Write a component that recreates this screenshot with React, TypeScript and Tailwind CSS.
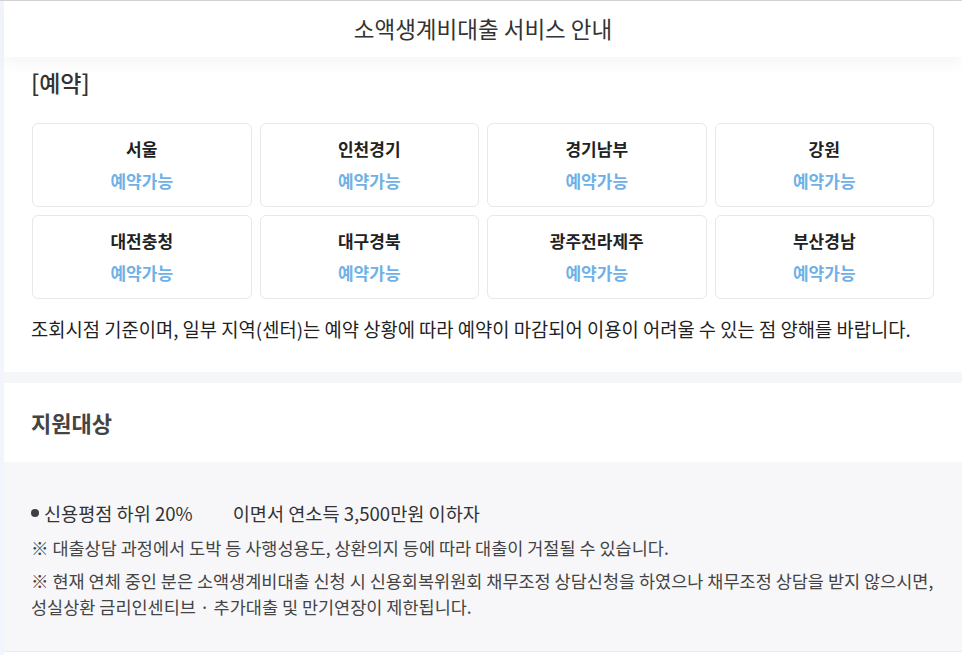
import React from "react";

const regions = [
  "서울",
  "인천경기",
  "경기남부",
  "강원",
  "대전충청",
  "대구경북",
  "광주전라제주",
  "부산경남",
];

const font = { fontFamily: '"Noto Sans CJK KR", "Noto Sans", sans-serif' };

export default function App() {
  return (
    <div style={font} className="flex min-h-screen border-t border-[#d2d2d2] bg-white text-[#333]">
      <div className="w-[4px] shrink-0 bg-[#f2f5fb]" />
      <div className="flex-1 flex flex-col">
        <header className="relative z-10 h-[56px] flex items-center justify-center bg-white text-[22.5px] text-[#333] shadow-[0_8px_14px_rgba(0,0,0,0.035)]">
          소액생계비대출 서비스 안내
        </header>

        {/* 예약 현황 */}
        <section className="px-[28px] pt-[10px] pb-[30px] bg-white">
          <h2 className="h-[30px] leading-[30px] text-[23px] font-medium text-[#333] -ml-[1px]">[예약]</h2>
          <div className="mt-[26px] grid grid-cols-4 gap-[8px]">
            {regions.map((name) => (
              <div
                key={name}
                className="h-[84px] rounded-[6px] border border-[#e8e8e8] flex flex-col items-center justify-center gap-[8px]"
              >
                <div className="leading-[24px] text-[17px] font-bold text-[#222]">{name}</div>
                <div className="leading-[24px] text-[17px] font-bold text-[#6fb1e7]">예약가능</div>
              </div>
            ))}
          </div>
          <p className="mt-[17px] -ml-[1px] leading-[26px] text-[18.75px] text-[#1f1f1f] whitespace-nowrap">
            조회시점 기준이며, 일부 지역(센터)는 예약 상황에 따라 예약이 마감되어 이용이 어려울 수 있는 점 양해를 바랍니다.
          </p>
        </section>

        <div className="h-[11px] bg-[#f5f6f8]" />

        {/* 지원대상 */}
        <section className="h-[79px] px-[27px] flex items-center bg-white">
          <h2 className="text-[22px] font-bold text-[#444]">지원대상</h2>
        </section>

        <section className="h-[190px] px-[27px] pt-[38px] bg-[#f7f7fa] border-b border-[#ebebeb] text-[#444]">
          <div className="flex items-center leading-[26px] text-[18.6px] text-[#333]">
            <span className="mr-[5px] inline-block h-[8px] w-[8px] rounded-full bg-[#3f3f46]" />
            <span>신용평점 하위 20%</span>
            <span className="ml-[40px]">이면서 연소득 3,500만원 이하자</span>
          </div>
          <p className="mt-[9px] leading-[26px] text-[17.5px] whitespace-nowrap">
            ※ 대출상담 과정에서 도박 등 사행성용도, 상환의지 등에 따라 대출이 거절될 수 있습니다.
          </p>
          <p className="mt-[7px] leading-[26px] text-[17.5px] whitespace-nowrap">
            ※ 현재 연체 중인 분은 소액생계비대출 신청 시 신용회복위원회 채무조정 상담신청을 하였으나 채무조정 상담을 받지 않으시면,
            <br />
            성실상환 금리인센티브 · 추가대출 및 만기연장이 제한됩니다.
          </p>
        </section>
      </div>
    </div>
  );
}
